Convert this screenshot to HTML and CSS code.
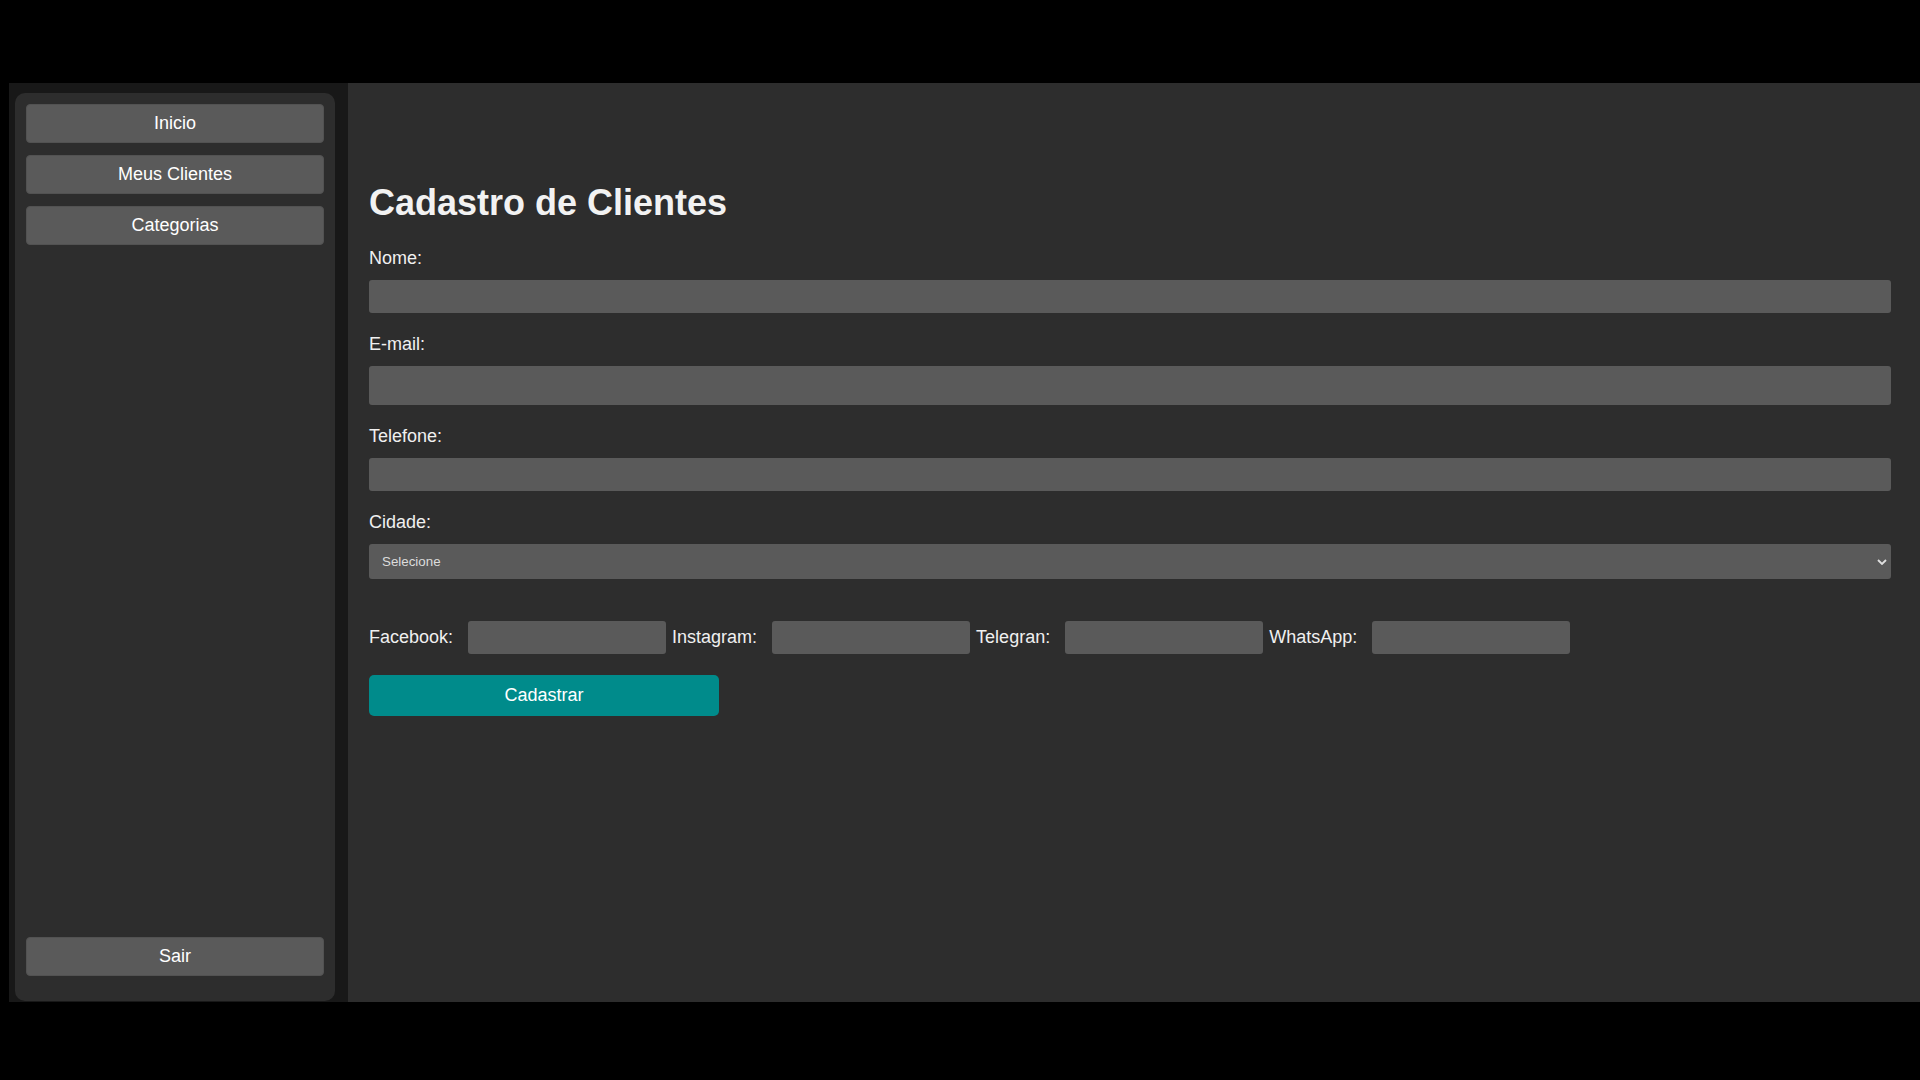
FILE: index.html
```html
<!DOCTYPE html>
<html lang="pt-BR">
<head>
<meta charset="utf-8">
<title>Cadastro de Clientes</title>
<link rel="stylesheet" href="styles.css">
</head>
<body>
<div class="app">
  <aside class="sidebar">
    <nav class="panel">
      <div class="nav-top">
        <button class="nav-btn">Inicio</button>
        <button class="nav-btn">Meus Clientes</button>
        <button class="nav-btn">Categorias</button>
      </div>
      <button class="nav-btn">Sair</button>
    </nav>
  </aside>
  <main class="main">
    <h1 class="title">Cadastro de Clientes</h1>
    <form class="form">
      <div class="group">
        <label class="label" for="nome">Nome:</label>
        <input class="field" id="nome" type="text">
      </div>
      <div class="group">
        <label class="label" for="email">E-mail:</label>
        <input class="field field-tall" id="email" type="email">
      </div>
      <div class="group">
        <label class="label" for="tel">Telefone:</label>
        <input class="field" id="tel" type="text">
      </div>
      <div class="group">
        <label class="label" for="cidade">Cidade:</label>
        <div class="select-wrap">
          <select class="select" id="cidade">
            <option>Selecione</option>
          </select>
          <svg class="chev" width="10" height="6" viewBox="0 0 10 6"><path d="M1 1 L5 5 L9 1" fill="none" stroke="#e0e0e0" stroke-width="1.8"/></svg>
        </div>
      </div>
      <div class="social">
        <label class="slabel" for="fb">Facebook:</label>
        <input class="sfield" id="fb" type="text">
        <label class="slabel" for="ig">Instagram:</label>
        <input class="sfield" id="ig" type="text">
        <label class="slabel" for="tg">Telegran:</label>
        <input class="sfield" id="tg" type="text">
        <label class="slabel" for="wa">WhatsApp:</label>
        <input class="sfield" id="wa" type="text">
      </div>
      <button class="submit" type="button">Cadastrar</button>
    </form>
  </main>
</div>
</body>
</html>
```
FILE: styles.css
```css
* { box-sizing: border-box; }
html, body { margin: 0; padding: 0; }
body {
  background: #000;
  font-family: "Liberation Sans", Arial, sans-serif;
  color: #f0f0f0;
  padding: 83px 0 78px 9px;
}
.app {
  display: flex;
  height: 919px;
}
.sidebar {
  width: 339px;
  flex: none;
  background: #181818;
  padding: 10px 13px 1px 6px;
  display: flex;
}
.panel {
  flex: 1;
  background: #2d2d2d;
  border-radius: 10px;
  padding: 11px 11px 25px 11px;
  display: flex;
  flex-direction: column;
  justify-content: space-between;
}
.nav-top {
  display: flex;
  flex-direction: column;
  gap: 12px;
}
.nav-btn {
  height: 39px;
  width: 100%;
  background: #5a5a5a;
  border: 1px solid #525252;
  border-radius: 4px;
  color: #fff;
  font-family: "Liberation Sans", Arial, sans-serif;
  font-size: 18px;
  padding: 0;
}
.main {
  flex: 1;
  background: #2d2d2d;
  padding: 99px 29px 0 21px;
}
.title {
  font-size: 36px;
  line-height: 41px;
  font-weight: bold;
  margin: 0 0 25px 0;
  color: #f2f2f2;
}
.group { margin-bottom: 21px; }
.label {
  display: block;
  font-size: 18px;
  line-height: 21px;
  margin-bottom: 11px;
}
.field {
  display: block;
  width: 100%;
  height: 33px;
  background: #5a5a5a;
  border: none;
  border-radius: 3px;
  color: #fff;
  font-size: 16px;
  padding: 0 10px;
}
.field-tall { height: 39px; }
.select-wrap { position: relative; }
.select {
  display: block;
  width: 100%;
  height: 35px;
  -webkit-appearance: none;
  appearance: none;
  background: #5a5a5a;
  border: none;
  border-radius: 3px;
  color: #dcdcdc;
  font-family: "Liberation Sans", Arial, sans-serif;
  font-size: 13.33px;
  padding: 0 13px;
}
.chev {
  position: absolute;
  right: 4px;
  top: 15px;
  pointer-events: none;
}
.social {
  display: flex;
  align-items: center;
  margin-top: 42px;
  height: 33px;
}
.slabel {
  font-size: 18px;
  line-height: 21px;
  margin-right: 15px;
}
.sfield {
  width: 198px;
  height: 33px;
  background: #5a5a5a;
  border: none;
  border-radius: 3px;
  margin-right: 6px;
  color: #fff;
  padding: 0 8px;
}
.submit {
  display: block;
  margin-top: 21px;
  width: 350px;
  height: 41px;
  background: #008b8b;
  border: none;
  border-radius: 5px;
  color: #fff;
  font-family: "Liberation Sans", Arial, sans-serif;
  font-size: 18px;
}
```
